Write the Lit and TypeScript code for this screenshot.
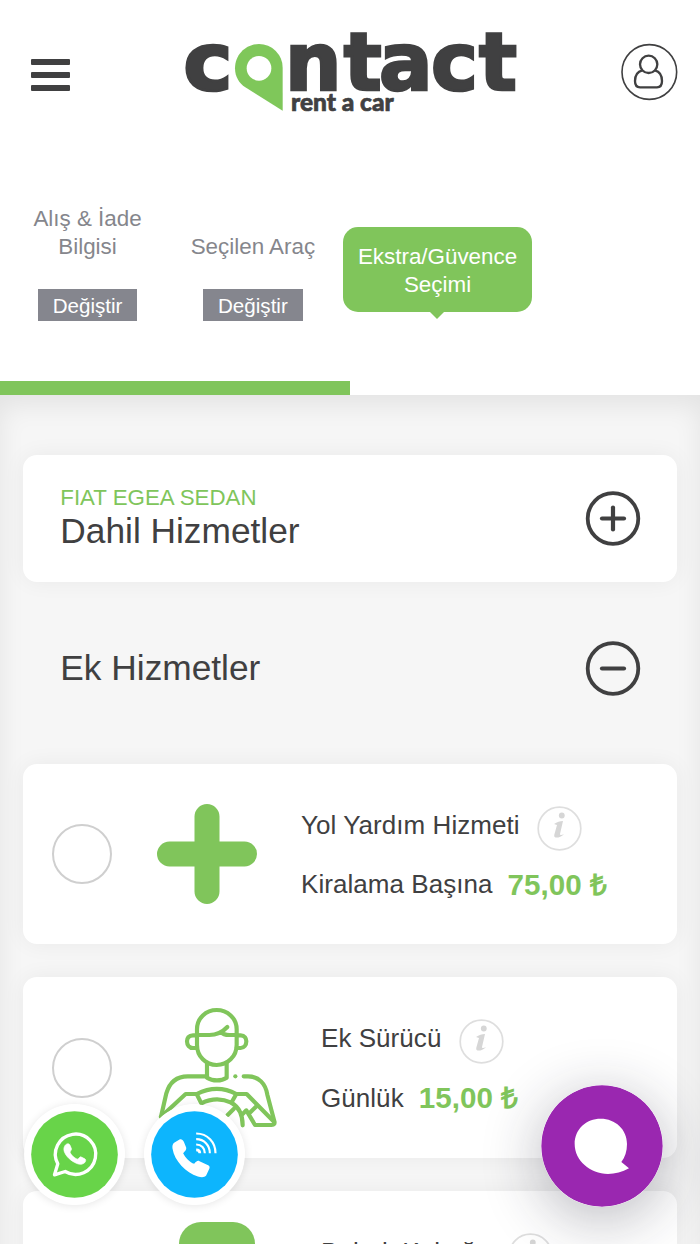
import { LitElement, html, css, svg } from 'lit';
import { customElement, property } from 'lit/decorators.js';

@customElement('brand-logo')
class BrandLogo extends LitElement {
  static styles = css`
    :host { display: block; width: 360px; height: 100px; }
    svg { display: block; overflow: visible; }
    text { font-weight: 900; fill: #404041; }
    .name { font-family: "DejaVu Sans", Lato, sans-serif; font-size: 238px; stroke: #404041; stroke-width: 8px; }
    .tag { font-family: Lato, "Liberation Sans", sans-serif; font-size: 75px; stroke: #404041; stroke-width: 2px; }
  `;
  render() {
    return html`<svg width="360" height="100" viewBox="0 0 1080 300">
      <text class="name" x="40" y="209" textLength="148" lengthAdjust="spacingAndGlyphs">c</text>
      <path d="M338 272 V143 A71 71 0 0 0 267 72 C227 72 195 104 195 145 C195 170 207 190 226 202Z" fill="#7fc75a"/>
      <circle cx="267" cy="145" r="37" fill="#fff"/>
      <text class="name" x="345 521 627 783 927" y="209">ntact</text>
      <text class="tag" x="363" y="272" textLength="308" lengthAdjust="spacingAndGlyphs">rent a car</text>
    </svg>`;
  }
}

@customElement('step-item')
class StepItem extends LitElement {
  @property() label = '';
  static styles = css`
    :host { display: flex; flex-direction: column; align-items: center; justify-content: flex-end; height: 117px; }
    .label { font-size: 22.4px; line-height: 28px; color: #85868c; text-align: center; white-space: pre-line; }
    .change { margin-top: 28px; height: 32px; padding: 0 15px; font: 20.6px/34px "Liberation Sans", Arial, sans-serif; color: #fff; background: #85868e; border: 0; }
  `;
  render() {
    return html`<div class="label">${this.label}</div><button class="change">Değiştir</button>`;
  }
}

@customElement('toggle-icon')
class ToggleIcon extends LitElement {
  @property({ type: Boolean }) open = false;
  static styles = css`:host, svg { display: block; width: 56px; height: 56px; }`;
  render() {
    return html`<svg viewBox="0 0 56 56" fill="none" stroke="#404041" stroke-width="4.2">
      <circle cx="28" cy="27.5" r="25.3" stroke-width="3.8"/>
      <path d="M17 27.5H39" stroke-linecap="round"/>
      ${this.open ? '' : svg`<path d="M28 16.5V38.5" stroke-linecap="round"/>`}
    </svg>`;
  }
}

const plusIcon = html`<svg width="100" height="100" viewBox="0 0 100 100">
  <path d="M50 12.5V87.5M12.5 50H87.5" stroke="#80c55b" stroke-width="25" stroke-linecap="round"/>
</svg>`;

const driverIcon = html`<svg width="120" height="121" viewBox="51 51 360 363" fill="none" stroke="#80c55b" stroke-width="12.5" stroke-linecap="round" stroke-linejoin="round">
  <path d="M171 164 V118 C171 84 198 60 230 60 C262 60 290 84 290 118 V164 C290 200 262 225 230 225 C198 225 171 200 171 164Z"/>
  <path d="M171 135 H208 C232 135 246 128 262 111 M244 126 C250 135 258 135 268 135 H290"/>
  <path d="M171 136 H159 C146 136 141 145 141 154 C141 165 148 174 159 174 H171 M290 136 H302 C314 136 319 145 319 154 C319 165 312 174 302 174 H290"/>
  <path d="M201 218 V263 C218 274 244 274 260 263 V218"/>
  <path d="M201 259 H143 C108 259 88 279 79 310 L63 380 M311 259 H324 C356 259 377 281 382 314 L403 394 C405 401 402 405 395 405 H345 L319 361 L308 372"/>
  <path d="M286 259 H286.1"/>
  <path d="M63 380 L137 312 H170 L184 340 C216 324 244 324 274 338 L289 312 H320 L402 395 M170 312 C210 292 250 291 289 312"/>
  <path d="M274 338 C298 352 308 376 308 406 M281 357 L263 375 M351 347 L331 367"/>
</svg>`;

const seatIcon = html`<svg width="120" height="121" viewBox="0 0 120 121">
  <rect x="22" y="1" width="76" height="112" rx="22" fill="#80c55b"/>
</svg>`;

@customElement('extra-card')
class ExtraCard extends LitElement {
  @property() name = '';
  @property() unit = '';
  @property() price = '';
  @property({ attribute: false }) icon: unknown;
  static styles = css`
    :host { display: flex; align-items: center; height: 180.5px; padding-left: 29px; background: #fff; border-radius: 14px; box-shadow: 0 0 22px rgba(0,0,0,.055); box-sizing: border-box; }
    .radio { width: 60px; height: 60px; box-sizing: border-box; border: 2px solid #cfcfcf; border-radius: 50%; flex: none; }
    .icon { margin-left: 45px; display: flex; }
    .copy { margin-left: 44px; font-size: 26px; letter-spacing: .05px; color: #404041; white-space: nowrap; padding-top: 1px; }
    .row { display: flex; align-items: center; height: 60px; }
    .row + .row { height: 59px; }
    .info { display: block; margin: 6px 0 0 17.3px; }
    .price { font-size: 29.6px; font-weight: 700; color: #80c55b; margin: -3px 0 0 15px; }
  `;
  render() {
    return html`
      <div class="radio"></div>
      <div class="icon">${this.icon}</div>
      <div class="copy">
        <div class="row"><span>${this.name}</span>
          <svg class="info" width="45" height="45" viewBox="0 0 45 45">
            <circle cx="22.5" cy="22.5" r="21.3" fill="none" stroke="#dedede" stroke-width="1.7"/>
            <circle cx="24.8" cy="9.5" r="2.9" fill="#d6d6d6"/>
            <path d="M17 18 C20 16 23 15 26 15 L23 28 C23 29.5 25 29 27 28 C24 31 21 32 18.5 31.5 C17 31 17 29.5 17.5 28 L20 19Z" fill="#d6d6d6"/>
          </svg>
        </div>
        <div class="row"><span>${this.unit}</span><span class="price">${this.price}</span></div>
      </div>`;
  }
}

const extras = [
  { name: 'Yol Yardım Hizmeti', unit: 'Kiralama Başına', price: '75,00 ₺', icon: plusIcon },
  { name: 'Ek Sürücü', unit: 'Günlük', price: '15,00 ₺', icon: driverIcon },
  { name: 'Bebek Koltuğu', unit: 'Günlük', price: '15,00 ₺', icon: seatIcon },
];

@customElement('app-root')
class AppRoot extends LitElement {
  static styles = css`
    :host { display: block; position: relative; width: 700px; height: 1244px; overflow: hidden; background: #fff; font-family: "Liberation Sans", Arial, sans-serif; color: #404041; }
    header { display: flex; align-items: flex-start; height: 204px; padding: 20px 22px 0 31px; box-sizing: border-box; }
    .menu { display: grid; gap: 7px; margin-top: 39px; width: 38.5px; }
    .menu i { height: 6px; border-radius: 1px; background: #404041; }
    brand-logo { margin-left: 100.5px; }
    .user { margin: 23px 0 0 auto; display: block; }
    .steps { display: flex; height: 176.5px; padding-left: 33.4px; box-sizing: border-box; }
    .steps step-item + step-item { margin-left: 49px; }
    .active { position: relative; margin: 22.6px 0 0 27.9px; height: 85.5px; width: 189px; box-sizing: border-box; padding-top: 16px; border-radius: 15px; background: #80c55b; color: #fff; font-size: 22.4px; line-height: 28px; text-align: center; }
    .active::after { content: ""; position: absolute; left: 87px; bottom: -7px; border: 7.5px solid transparent; border-top-color: #80c55b; border-bottom: 0; }
    .progress { width: 350px; height: 14.8px; background: #80c55b; }
    main { height: 1000px; padding: 60px 23px 0; box-sizing: border-box; background: #f6f6f6; box-shadow: inset 0 10px 26px rgba(0,0,0,.08); }
    .section { display: flex; align-items: center; justify-content: space-between; height: 126.5px; padding: 0 36px 0 37.3px; box-sizing: border-box; }
    .included { background: #fff; border-radius: 14px; box-shadow: 0 0 22px rgba(0,0,0,.055); }
    .plain { margin: 23.5px 0 32px; }
    .car { font-size: 22.3px; line-height: 26px; color: #80c55b; margin-top: -1px; }
    .title { font-size: 35.3px; line-height: 40px; white-space: nowrap; }
    .plain .title { margin-top: -2px; }
    .list { display: grid; gap: 33px; }
    .float { position: absolute; display: block; border-radius: 50%; }
    .wa { left: 24px; top: 1104px; box-shadow: 0 1px 8px rgba(0,0,0,.1); }
    .call { left: 144px; top: 1104px; box-shadow: 0 1px 8px rgba(0,0,0,.1); }
    .chat { left: 541px; top: 1085px; box-shadow: 0 12px 60px rgba(30,30,50,.32); }
  `;
  render() {
    return html`
      <header>
        <div class="menu"><i></i><i></i><i></i></div>
        <brand-logo></brand-logo>
        <svg class="user" width="58" height="58" viewBox="61 68 174 174" fill="none" stroke="#404041">
          <circle cx="149" cy="155" r="82" stroke-width="4.8"/>
          <circle cx="147" cy="132" r="26" stroke-width="7"/>
          <path d="M128 150 C112 154 106 166 106 182 C106 194 111 201 121 201 H172 C182 201 187 194 187 182 C187 166 181 154 166 150" stroke-width="7"/>
        </svg>
      </header>
      <nav class="steps">
        <step-item .label=${'Alış & İade\nBilgisi'}></step-item>
        <step-item .label=${'Seçilen Araç'}></step-item>
        <div class="active">Ekstra/Güvence<br>Seçimi</div>
      </nav>
      <div class="progress"></div>
      <main>
        <section class="section included">
          <div><div class="car">FIAT EGEA SEDAN</div><div class="title">Dahil Hizmetler</div></div>
          <toggle-icon></toggle-icon>
        </section>
        <section class="section plain">
          <div class="title">Ek Hizmetler</div>
          <toggle-icon open></toggle-icon>
        </section>
        <div class="list">
          ${extras.map(e => html`<extra-card .name=${e.name} .unit=${e.unit} .price=${e.price} .icon=${e.icon}></extra-card>`)}
        </div>
      </main>
      <svg class="float wa" width="101" height="101" viewBox="42.5 41.5 303 303">
        <circle cx="194" cy="193" r="151" fill="#fff"/>
        <circle cx="194" cy="193" r="130" fill="#68d449"/>
        <path d="M134 254 L144 221 A60.5 60.5 0 1 1 166 244Z" fill="none" stroke="#fff" stroke-width="10" stroke-linejoin="round"/>
        <path d="M170 162 C175 160 179 161 181 166 L185 176 C186 180 179 184 181 188 C186 197 193 203 202 207 C206 208 210 199 213 200 L225 206 C229 208 228 213 225 217 C219 223 210 224 201 220 C184 213 170 200 164 186 C160 176 163 166 170 162Z" fill="#fff" stroke="#fff" stroke-width="2"/>
      </svg>
      <svg class="float call" width="101" height="101" viewBox="401.5 41.5 303 303">
        <circle cx="553" cy="193" r="151" fill="#fff"/>
        <circle cx="553" cy="193" r="130" fill="#0db5fd"/>
        <path d="M492 158 L508 148 C514 146 518 149 521 155 L528 172 C530 178 524 184 519 189 C526 203 539 216 552 221 C557 215 562 210 568 213 L594 225 C600 228 599 233 596 239 L588 256 C583 262 574 262 563 259 C527 247 493 213 487 175 C486 168 487 162 492 158Z" fill="#fff"/>
        <g fill="none" stroke="#fff" stroke-width="6.5">
          <path d="M558 130 C592 130 616 156 616 189 M558 147 C582 147 599 165 599 189 M558 163 C574 163 584 174 584 189"/>
          <path d="M558 179 C566 179 569 182 569 189" stroke-width="8"/>
        </g>
      </svg>
      <svg class="float chat" width="122" height="122" viewBox="63 75 366 366">
        <circle cx="246" cy="258" r="182" fill="#9a27b0"/>
        <path d="M164 252 C164 207 199 176 242 176 C286 176 321 208 321 252 C321 274 315 292 304 306 L327 325 C307 337 285 342 264 342 C210 341 164 302 164 252Z" fill="#fff"/>
      </svg>`;
  }
}
